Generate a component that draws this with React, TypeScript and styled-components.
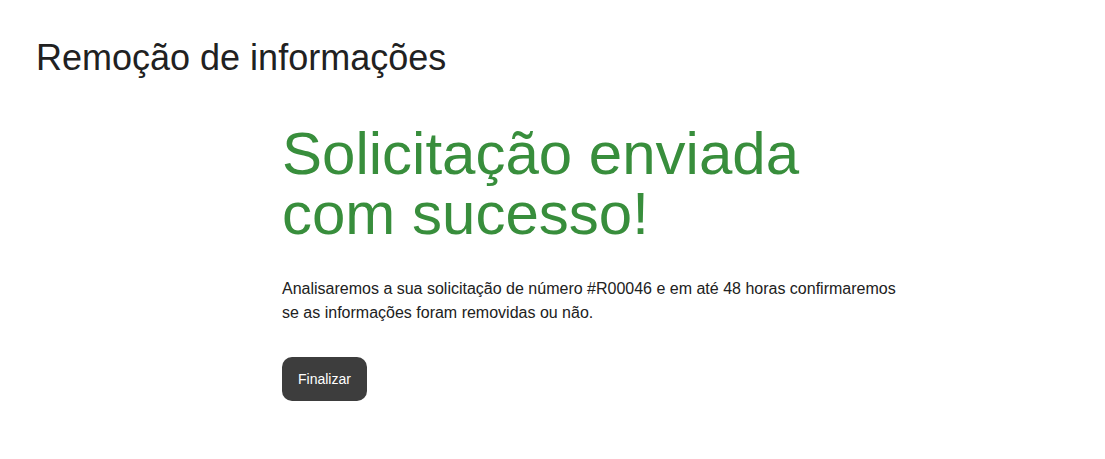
import React from 'react'
import styled, { createGlobalStyle } from 'styled-components'

const GlobalStyle = createGlobalStyle`
  html, body {
    margin: 0;
    padding: 0;
    background: #ffffff;
    font-family: "Liberation Sans", Arial, sans-serif;
    color: #212121;
  }
`

const Page = styled.div`
  padding: 36px 36px 0 36px;
`

const PageTitle = styled.h1`
  margin: 0;
  font-size: 36px;
  line-height: 44px;
  font-weight: 400;
  color: #212121;
`

const Content = styled.section`
  margin: 44px 0 0 246px;
  width: 620px;
`

const SuccessTitle = styled.h2`
  margin: 0;
  font-size: 60px;
  line-height: 60px;
  font-weight: 400;
  color: #388e3c;
`

const Message = styled.p`
  margin: 33px 0 0;
  font-size: 16px;
  line-height: 24px;
  color: #212121;
`

const FinishButton = styled.button`
  margin-top: 32px;
  height: 44px;
  padding: 0 16px;
  border: none;
  border-radius: 10px;
  background: #3d3d3d;
  color: #ffffff;
  font-family: inherit;
  font-size: 14px;
  cursor: pointer;
`

export default function App() {
  return (
    <>
      <GlobalStyle />
      <Page>
        <PageTitle>Remoção de informações</PageTitle>
        <Content>
          <SuccessTitle>
            Solicitação enviada
            <br />
            com sucesso!
          </SuccessTitle>
          <Message>
            Analisaremos a sua solicitação de número #R00046 e em até 48 horas confirmaremos
            se as informações foram removidas ou não.
          </Message>
          <FinishButton>Finalizar</FinishButton>
        </Content>
      </Page>
    </>
  )
}
